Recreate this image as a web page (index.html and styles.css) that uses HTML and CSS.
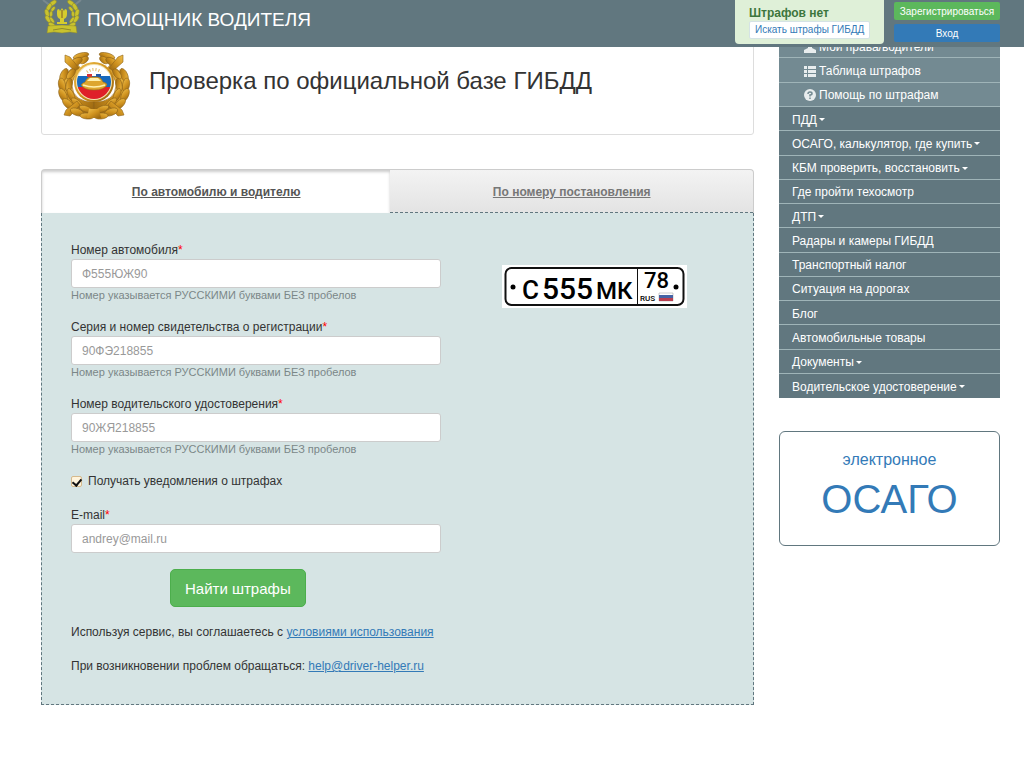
FILE: index.html
```html
<!DOCTYPE html>
<html lang="ru">
  <head>
    <meta charset="UTF-8" />
    <meta name="viewport" content="width=device-width, initial-scale=1.0" />
    <title>Помощник водителя</title>
    <link rel="stylesheet" href="styles.css">
  </head>
  <body>
    <header class="topbar">
      <a href="#" class="brand">
        <svg class="brand-logo" width="42" height="36" viewBox="0 0 42 36" aria-hidden="true">
          <path d="M2 0l9 7M40 0l-9 7" stroke="#78888f" stroke-width="2" />
          <g id="branch" fill="#c9c32e" stroke="#8f8b2b" stroke-width="0.5">
            <ellipse cx="12" cy="3" rx="4" ry="2" transform="rotate(-35 12 3)" />
            <ellipse cx="8" cy="7" rx="4" ry="2" transform="rotate(-60 8 7)" />
            <ellipse cx="12" cy="9" rx="3" ry="1.5" transform="rotate(-50 12 9)" />
            <ellipse cx="6" cy="13" rx="4" ry="2" transform="rotate(75 6 13)" />
            <ellipse cx="10" cy="14" rx="3" ry="1.5" transform="rotate(95 10 14)" />
            <ellipse cx="7" cy="19" rx="4" ry="2" transform="rotate(55 7 19)" />
            <ellipse cx="11" cy="20" rx="3.5" ry="1.5" transform="rotate(55 11 20)" />
            <ellipse cx="11" cy="25" rx="4" ry="2" transform="rotate(30 11 25)" />
          </g>
          <use href="#branch" transform="translate(42 0) scale(-1 1)" />
          <path d="M16 11q0-2 2-2l1 2 2-3 2 3 1-2q2 0 2 2v3q0 4-3 5v3h3v2H16v-2h3v-3q-3-1-3-5z" fill="#d5cc2d" />
          <path d="M21 10v8" stroke="#a8932b" stroke-width="2" />
          <path d="M7 26q14-2 28 0l1 7-7-1-8 1-8-1-7 1z" fill="#c9c32e" stroke="#8f8b2b" stroke-width="0.5" />
          <path d="M12 30q9-3 18 0" fill="none" stroke="#8f8b2b" stroke-width="1" />
        </svg>
        <span>ПОМОЩНИК ВОДИТЕЛЯ</span>
      </a>
      <div class="fines">
        <strong>Штрафов нет</strong>
        <a href="#">Искать штрафы ГИБДД</a>
      </div>
      <div class="account">
        <button type="button" class="btn-register">Зарегистрироваться</button>
        <button type="button" class="btn-login">Вход</button>
      </div>
    </header>

    <div class="container">
      <main>
        <div class="title-box">
          <svg class="emblem" width="74" height="70" viewBox="0 0 74 70" aria-hidden="true">
            <defs>
              <linearGradient id="gold" x1="0" y1="0" x2="1" y2="1">
                <stop offset="0" stop-color="#f0c04c" />
                <stop offset="0.5" stop-color="#cf921f" />
                <stop offset="1" stop-color="#94620f" />
              </linearGradient>
              <clipPath id="flagClip"><circle cx="37" cy="36" r="17" /></clipPath>
            </defs>
            <g id="wreath" fill="url(#gold)" stroke="#8d6218" stroke-width="0.6">
              <path d="M21 13Q3 21 6 41q3 17 27 23l4-6V50Q16 50 15 34q0-10 10-16z" />
              <ellipse cx="24" cy="4" rx="8" ry="3" transform="rotate(-15 24 4)" />
              <ellipse cx="27" cy="8" rx="5" ry="3" transform="rotate(-35 27 8)" />
              <ellipse cx="19" cy="10" rx="7" ry="3.5" transform="rotate(-30 19 10)" />
              <path d="M8 3l5 2 9 11-4 3L8 10z" />
              <ellipse cx="7" cy="23" rx="7" ry="3.5" transform="rotate(-65 7 23)" />
              <ellipse cx="14" cy="22" rx="6" ry="3" transform="rotate(-50 14 22)" />
              <ellipse cx="5" cy="33" rx="7" ry="3.5" transform="rotate(80 5 33)" />
              <ellipse cx="12" cy="33" rx="7" ry="3" transform="rotate(-80 12 33)" />
              <ellipse cx="6" cy="43" rx="7" ry="3.5" transform="rotate(65 6 43)" />
              <ellipse cx="14" cy="43" rx="7" ry="3" transform="rotate(65 14 43)" />
              <ellipse cx="11" cy="52" rx="7" ry="3.5" transform="rotate(45 11 52)" />
              <ellipse cx="20" cy="51" rx="7" ry="3" transform="rotate(40 20 51)" />
              <path d="M20 49l3 4-10 11-6-1 2-5z" />
              <ellipse cx="20" cy="60" rx="7" ry="3.5" transform="rotate(20 20 60)" />
              <ellipse cx="29" cy="57" rx="7" ry="3" transform="rotate(20 29 57)" />
              <ellipse cx="30" cy="64" rx="7" ry="3" transform="rotate(5 30 64)" />
            </g>
            <use href="#wreath" transform="translate(74 0) scale(-1 1)" />
            <path d="M32 57h10l2 9H30z" fill="url(#gold)" />
            <g transform="translate(0 -6)">
              <circle cx="37" cy="36" r="20" fill="url(#gold)" />
              <circle cx="37" cy="36" r="18" fill="#f5e4b3" />
              <g clip-path="url(#flagClip)">
                <path fill="#fff" d="M20 19h34v12H20z" />
                <path fill="#1769bd" d="M20 30h34v11H20z" />
                <path fill="#df2029" d="M20 41h34v12H20z" />
              </g>
              <path d="M30 26a11 11 0 0 1 14 0" fill="none" stroke="#e3bd68" stroke-width="3" stroke-dasharray="1 2" />
              <path d="M30 28h5v3h-5z" fill="#d63237" />
              <path d="M39 28h5v3h-5z" fill="#2158a8" />
              <path d="M28 36q2-5 6-5h6q4 0 6 5 4 1 4 3-3 5-13 5t-13-5q1-2 4-3z" fill="#dda62f" stroke="#9b6b17" stroke-width="0.6" />
              <path d="M30 35l3-3h8l3 3z" fill="#fff0ad" />
              <path d="M26 39q11 4 22 0" fill="none" stroke="#fff0ad" stroke-width="1.5" />
            </g>
          </svg>
          <h1>Проверка по официальной базе ГИБДД</h1>
        </div>

        <nav class="tabs">
          <a href="#" class="active">По автомобилю и водителю</a>
          <a href="#">По номеру постановления</a>
        </nav>

        <div class="panel">
          <form id="finesForm">
            <div class="field">
              <label for="auto">Номер автомобиля<span>*</span></label>
              <input type="text" id="auto" name="auto" placeholder="Ф555ЮЖ90" />
              <small>Номер указывается РУССКИМИ буквами БЕЗ пробелов</small>
            </div>
            <div class="field">
              <label for="sts">Серия и номер свидетельства о регистрации<span>*</span></label>
              <input type="text" id="sts" name="sts" placeholder="90ФЭ218855" />
              <small>Номер указывается РУССКИМИ буквами БЕЗ пробелов</small>
            </div>
            <div class="field">
              <label for="vu">Номер водительского удостоверения<span>*</span></label>
              <input type="text" id="vu" name="vu" placeholder="90ЖЯ218855" />
              <small>Номер указывается РУССКИМИ буквами БЕЗ пробелов</small>
            </div>
            <div class="check">
              <input type="checkbox" id="notify" name="notify" checked />
              <label for="notify">Получать уведомления о штрафах</label>
            </div>
            <div class="field">
              <label for="email">E-mail<span>*</span></label>
              <input type="email" id="email" name="email" placeholder="andrey@mail.ru" />
            </div>
            <button type="submit" class="btn-search">Найти штрафы</button>
            <p>Используя сервис, вы соглашаетесь с <a href="#">условиями использования</a></p>
            <p>При возникновении проблем обращаться: <a href="mailto:help@driver-helper.ru">help@driver-helper.ru</a></p>
          </form>
          <svg class="plate" width="185" height="43" viewBox="0 0 185 43" role="img" aria-label="С555МК 78 RUS">
            <path fill="#fff" d="M0 0h185v43H0z" />
            <rect x="3.5" y="3" width="178" height="37" rx="6" fill="#fff" stroke="#111" stroke-width="2" />
            <path d="M135.500 3v37" stroke="#111" stroke-width="1" />
            <circle cx="11" cy="22" r="2.500" />
            <circle cx="174" cy="22" r="2.500" />
            <g class="plate-text">
              <text x="20" y="34" font-size="26">С</text>
              <text x="40" y="34" font-size="30">555</text>
              <text x="94" y="34" font-size="24">МК</text>
              <text x="142" y="23" font-size="22">78</text>
              <text x="138" y="36" font-size="8">RUS</text>
            </g>
            <path fill="#fff" stroke="#999" stroke-width="0.5" d="M157 28h14v8h-14z" />
            <path fill="#4563a5" d="M157 30h14v3h-14z" />
            <path fill="#b83f50" d="M157 33h14v3h-14z" />
          </svg>
        </div>
      </main>

      <aside>
        <ul class="submenu">
          <li><a href="#">
            <svg width="12" height="12" viewBox="0 0 12 12" aria-hidden="true"><path d="M6 0a3 3 0 0 1 2 5v2l4 2v3H0V9l4-2V5a3 3 0 0 1 2-5z" /></svg>
            Мои права/водители</a></li>
          <li><a href="#">
            <svg width="12" height="12" viewBox="0 0 12 12" aria-hidden="true"><path d="M0 1h3v3H0zM4 1h8v3H4zM0 5h3v3H0zM4 5h8v3H4zM0 9h3v3H0zM4 9h8v3H4z" /></svg>
            Таблица штрафов</a></li>
          <li><a href="#">
            <svg width="12" height="12" viewBox="0 0 12 12" aria-hidden="true"><circle cx="6" cy="6" r="6" /><path class="mark" d="M4 5q0-2 2-2t2 1.500Q8 6 6 6v1.500M6 8.500V10" /></svg>
            Помощь по штрафам</a></li>
        </ul>
        <ul class="menu">
          <li><a href="#" class="dropdown">ПДД</a></li>
          <li><a href="#" class="dropdown">ОСАГО, калькулятор, где купить</a></li>
          <li><a href="#" class="dropdown">КБМ проверить, восстановить</a></li>
          <li><a href="#">Где пройти техосмотр</a></li>
          <li><a href="#" class="dropdown">ДТП</a></li>
          <li><a href="#">Радары и камеры ГИБДД</a></li>
          <li><a href="#">Транспортный налог</a></li>
          <li><a href="#">Ситуация на дорогах</a></li>
          <li><a href="#">Блог</a></li>
          <li><a href="#">Автомобильные товары</a></li>
          <li><a href="#" class="dropdown">Документы</a></li>
          <li><a href="#" class="dropdown">Водительское удостоверение</a></li>
        </ul>
        <a href="#" class="osago">
          <span>электронное</span>
          <strong>ОСАГО</strong>
        </a>
      </aside>
    </div>
  </body>
</html>
```

FILE: styles.css
```css
* {
  box-sizing: border-box;
}
body {
  margin: 0;
  padding-top: 34px;
  font-family: "Liberation Sans", Arial, sans-serif;
  font-size: 12px;
  line-height: 18px;
  color: #333;
  background-color: #fff;
}
a {
  color: #337ab7;
}
button,
input {
  font-family: inherit;
}
.topbar {
  position: fixed;
  top: 0;
  left: 0;
  width: 100%;
  height: 47px;
  padding: 0 24px 0 41px;
  display: flex;
  align-items: flex-start;
  gap: 10px;
  background-color: #61777f;
  z-index: 1;
}
.brand {
  display: flex;
  gap: 4px;
  margin-right: auto;
  color: #fff;
  font-size: 19px;
  line-height: 39px;
  text-decoration: none;
}
.fines {
  display: flex;
  flex-direction: column;
  align-items: flex-start;
  width: 149px;
  height: 44px;
  padding: 5px 14px;
  border-radius: 0 0 4px 4px;
  background-color: #dff0d8;
}
.fines strong {
  color: #3c763d;
  font-size: 12px;
  line-height: 16px;
}
.fines a {
  padding: 0 5px;
  border: 1px solid #d5e3e5;
  border-radius: 2px;
  background-color: #fff;
  font-size: 10px;
  line-height: 16px;
  text-decoration: none;
  white-space: nowrap;
}
.account {
  display: flex;
  flex-direction: column;
  gap: 4px;
  width: 106px;
  padding-top: 2px;
}
.account button {
  height: 18px;
  padding: 0;
  border: 0;
  border-radius: 2px;
  color: #fff;
  font-size: 10px;
  cursor: pointer;
}
.account .btn-register {
  background-color: #5cb85c;
}
.account .btn-login {
  background-color: #337ab7;
}
.container {
  display: grid;
  grid-template-columns: minmax(0, 1fr) 221px;
  align-items: start;
  gap: 25px;
  padding: 0 24px 56px 41px;
}
.title-box {
  display: flex;
  gap: 18px;
  height: 101px;
  padding: 17px 15px;
  border: 1px solid #ddd;
  border-radius: 3px;
}
h1 {
  margin: 0;
  font-size: 24px;
  font-weight: normal;
  line-height: 58px;
}
.tabs {
  display: flex;
  height: 44px;
  margin-top: 34px;
  border: 1px solid #ccc;
  border-bottom: 0;
  border-radius: 4px 4px 0 0;
  background: linear-gradient(#f3f3f3, #e3e3e3);
}
.tabs a {
  flex: 1;
  border-bottom: 1px dashed #61777f;
  color: #777;
  font-weight: bold;
  line-height: 44px;
  text-align: center;
}
.tabs .active {
  flex: 0 0 49%;
  border-bottom: 0;
  color: #555;
  background-color: #fff;
  box-shadow: inset 0 2px 3px #ccc;
}
.panel {
  display: flex;
  align-items: flex-start;
  gap: 61px;
  padding: 28px 29px 29px;
  border: 1px dashed #61777f;
  border-top: 0;
  background-color: #d6e4e4;
}
.panel form {
  display: flex;
  flex-direction: column;
  flex: 0 1 370px;
  gap: 16px;
}
.field {
  display: flex;
  flex-direction: column;
}
.field span {
  color: #f00;
}
.field input {
  width: 100%;
  height: 29px;
  padding: 0 10px;
  border: 1px solid #ccc;
  border-radius: 3px;
  color: #555;
  font-size: 12px;
}
.field input::placeholder {
  color: #999;
}
.field small {
  color: #7b8788;
  font-size: 11px;
  line-height: 14px;
}
.check {
  display: flex;
  align-items: center;
  gap: 6px;
}
.check input {
  appearance: none;
  display: flex;
  justify-content: center;
  width: 11px;
  height: 11px;
  margin: 0;
  border: 1px solid #d5b98c;
  border-radius: 2px;
  background-color: #fff4dc;
}
.check input:checked::before {
  content: "";
  width: 4px;
  height: 7px;
  border: solid #111;
  border-width: 0 2px 2px 0;
  transform: rotate(40deg);
}
.btn-search {
  align-self: flex-start;
  height: 38px;
  margin-left: 99px;
  padding: 0 14px;
  border: 1px solid #4cae4c;
  border-radius: 5px;
  color: #fff;
  background-color: #5cb85c;
  font-size: 15px;
  cursor: pointer;
}
.panel p {
  margin: 0;
  white-space: nowrap;
}
.plate {
  flex: none;
  margin-top: 24px;
}
.plate-text {
  font-family: Roboto, sans-serif;
  font-weight: 500;
}
aside ul {
  display: grid;
  grid-auto-rows: 1fr;
  margin: 0;
  padding: 0;
  list-style-type: none;
}
aside li {
  border-bottom: 1px solid #9fb4b8;
}
aside li a {
  display: flex;
  align-items: center;
  height: 100%;
  padding: 2px 13px 0;
  color: #fff;
  text-decoration: none;
}
.submenu {
  height: 73px;
  background-color: #738a92;
}
.submenu a {
  gap: 3px;
  padding-left: 25px;
}
.submenu svg {
  fill: #e8edee;
}
.submenu .mark {
  fill: none;
  stroke: #738a92;
  stroke-width: 1.5;
}
.menu {
  height: 291px;
  background-color: #61777f;
}
.menu li:last-child {
  border-bottom: 0;
}
.dropdown::after {
  content: "";
  margin-left: 2px;
  border: 3px solid transparent;
  border-top-color: #fff;
  border-bottom: 0;
}
.osago {
  display: flex;
  flex-direction: column;
  align-items: center;
  height: 115px;
  margin-top: 33px;
  padding-top: 18px;
  border: 1px solid #61777f;
  border-radius: 6px;
  text-decoration: none;
}
.osago span {
  font-size: 16px;
  line-height: 20px;
}
.osago strong {
  font-size: 40px;
  font-weight: normal;
  line-height: 58px;
}
```
